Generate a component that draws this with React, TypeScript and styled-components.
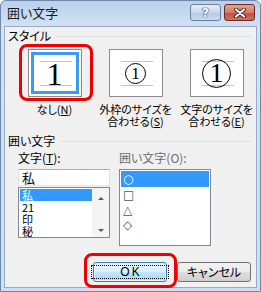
import React from "react"
import styled, { createGlobalStyle, css } from "styled-components"

const GlobalStyle = createGlobalStyle`
  html, body {
    margin: 0;
    padding: 0;
    background: #ffffff;
  }
  body {
    font-family: "Noto Sans CJK JP", "Liberation Sans", sans-serif;
    font-feature-settings: "palt";
  }
`

const Window = styled.div`
  box-sizing: border-box;
  width: 261px;
  height: 292px;
  display: flex;
  flex-direction: column;
  border: 1px solid #6f88aa;
  border-radius: 6px 6px 0 0;
  background: linear-gradient(#bad1ea, #d3e2f4 26px, #cddff3);
`
const TitleBar = styled.div`
  height: 25px;
  display: flex;
  align-items: center;
  padding: 0 5px 0 6px;
`
const Title = styled.div`
  flex: 1;
  font-size: 13px;
  line-height: 13px;
  color: #1b1b1b;
  margin-top: -2px;
`
const CaptionButton = styled.div<{ $close?: boolean }>`
  box-sizing: border-box;
  width: 31px;
  height: 17px;
  margin-left: 3px;
  margin-top: -2px;
  display: flex;
  align-items: center;
  justify-content: center;
  border-radius: 3px;
  border: 1px solid #6a80a0;
  background: linear-gradient(#e4edf8, #c6d7ec 50%, #b3c9e4 51%, #c9dbf0);
  font-family: "DejaVu Sans", sans-serif;
  font-weight: bold;
  font-size: 13px;
  color: #ffffff;
  text-shadow: 0 0 1px #2d3f5a, 0 0 1px #2d3f5a, 0 0 1px #2d3f5a;
  ${p =>
    p.$close &&
    css`
      border-color: #6b2a20;
      background: linear-gradient(#e6a294, #d57b69 50%, #c0503c 51%, #d0705b);
    `}
`
const Client = styled.div`
  flex: 1;
  margin: 0 3px 3px 3px;
  border: 1px solid #95abc7;
  background: #f0f0f0;
  display: flex;
  flex-direction: column;
  padding: 3px 4px 5px 3px;
  font-size: 12px;
  line-height: 12px;
  color: #000;
`
const SectionHeader = styled.div<{ $top?: number }>`
  display: flex;
  align-items: center;
  gap: 6px;
  height: 12px;
  margin-top: ${p => p.$top ?? 0}px;
  &::after {
    content: "";
    flex: 1;
    height: 1px;
    background: #d9dfe6;
  }
`
const Options = styled.div`
  display: grid;
  grid-template-columns: repeat(3, 81px);
  margin: 7px 0 0 6px;
`
const Option = styled.div`
  display: flex;
  flex-direction: column;
  align-items: center;
`
const Highlight = styled.div<{ $t: number; $r: number; $b: number; $l: number }>`
  position: relative;
  display: flex;
  &::after {
    content: "";
    position: absolute;
    top: ${p => p.$t}px;
    right: ${p => p.$r}px;
    bottom: ${p => p.$b}px;
    left: ${p => p.$l}px;
    border: 3px solid #f00000;
    border-radius: 8px;
    pointer-events: none;
  }
`
const OptionBox = styled.div<{ $selected?: boolean }>`
  box-sizing: border-box;
  position: relative;
  width: 54px;
  height: 48px;
  border: 1px solid #8c8c8c;
  background: #ffffff;
  display: flex;
  align-items: center;
  justify-content: center;
  ${p =>
    p.$selected &&
    css`
      box-shadow: inset 0 0 0 2px #ffffff, inset 0 0 0 5px #3c9af2;
    `}
  &::before,
  &::after {
    content: "";
    position: absolute;
    left: 11px;
    width: 32px;
    height: 1px;
    background: #c4c4c4;
  }
  &::before {
    top: 11px;
  }
  &::after {
    top: 35px;
  }
`
const Glyph = styled.span<{ $size: number }>`
  position: relative;
  z-index: 1;
  font-family: "Liberation Serif", serif;
  font-size: ${p => p.$size}px;
  line-height: 1;
  margin-top: 2px;
`
const Circle = styled.span<{ $d: number; $fs: number }>`
  position: relative;
  z-index: 1;
  box-sizing: border-box;
  width: ${p => p.$d}px;
  height: ${p => p.$d}px;
  border: 1px solid #000;
  border-radius: 50%;
  display: flex;
  align-items: center;
  justify-content: center;
  font-family: "Liberation Serif", serif;
  font-size: ${p => p.$fs}px;
  line-height: 1;
`
const OptionLabel = styled.div`
  margin-top: 6px;
  text-align: center;
  white-space: nowrap;
  font-size: 11px;
  line-height: 12px;
`
const Key = styled.span`
  text-decoration: underline;
`
const Fields = styled.div`
  display: grid;
  grid-template-columns: 92px 92px;
  gap: 9px;
  margin: 5px 0 0 10px;
`
const Field = styled.div`
  display: flex;
  flex-direction: column;
`
const FieldLabel = styled.div<{ $disabled?: boolean }>`
  height: 12px;
  margin-bottom: 5px;
  color: ${p => (p.$disabled ? "#6d6d6d" : "#000")};
`
const TextInput = styled.div`
  box-sizing: border-box;
  height: 17px;
  border: 1px solid #abadb3;
  border-color: #abadb3 #dbdfe6 #e3e9ef #e2e3ea;
  background: #fff;
  padding: 1px 0 0 3px;
  font-size: 13px;
  line-height: 14px;
`
const ListBox = styled.div<{ $h: number; $top?: number }>`
  box-sizing: border-box;
  height: ${p => p.$h}px;
  margin-top: ${p => p.$top ?? 0}px;
  border: 1px solid #828790;
  background: #fff;
  display: flex;
  padding: 1px;
  overflow: hidden;
`
const Items = styled.div`
  flex: 1;
  display: flex;
  flex-direction: column;
`
const Item = styled.div<{ $selected?: boolean; $h: number }>`
  flex: none;
  height: ${p => p.$h}px;
  display: flex;
  align-items: center;
  padding-left: 2px;
  font-size: 11px;
  line-height: 11px;
  color: ${p => (p.$selected ? "#fff" : "#000")};
  background: ${p => (p.$selected ? "#3399ff" : "transparent")};
`
const Shape = styled.span<{ $selected?: boolean }>`
  font-family: "DejaVu Sans", sans-serif;
  font-size: 12px;
  line-height: 12px;
  color: ${p => (p.$selected ? "#fff" : "#555")};
`
const ScrollBar = styled.div`
  width: 17px;
  margin: -1px -1px -1px 0;
  background: #f4f4f4;
  display: flex;
  flex-direction: column;
  justify-content: space-between;
  align-items: center;
  padding: 9px 0 5px;
`
const Arrow = styled.span<{ $down?: boolean }>`
  width: 0;
  height: 0;
  border-left: 3px solid transparent;
  border-right: 3px solid transparent;
  ${p =>
    p.$down
      ? css`
          border-top: 3px solid #5a5a5a;
        `
      : css`
          border-bottom: 3px solid #5a5a5a;
        `}
`
const ButtonRow = styled.div`
  margin-top: auto;
  display: flex;
  justify-content: flex-end;
  gap: 10px;
  padding-right: 1px;
`
const Button = styled.div<{ $default?: boolean }>`
  box-sizing: border-box;
  width: 74px;
  height: 20px;
  border: 1px solid #707070;
  border-radius: 3px;
  background: linear-gradient(#f2f2f2, #ebebeb 50%, #dddddd 51%, #cfcfcf);
  display: flex;
  align-items: center;
  justify-content: center;
  font-size: 12px;
  color: #000;
  ${p =>
    p.$default &&
    css`
      border-color: #3c7fb1;
      background: linear-gradient(#eaf6fd, #d9f0fc 50%, #bee6fd 51%, #a7d9f5);
      box-shadow: inset 0 0 0 1px #e3f4fc;
      span {
        outline: 1px dotted #000;
        outline-offset: 0;
        padding: 0 26px 0 28px;
        font-family: "Liberation Sans", sans-serif;
        letter-spacing: 2px;
      }
    `}
`

const styles = [
  { key: "N", label: ["なし"], glyph: <Glyph $size={32}>1</Glyph>, selected: true },
  { key: "S", label: ["外枠のサイズを", "合わせる"], glyph: <Circle $d={21} $fs={17}>1</Circle> },
  { key: "E", label: ["文字のサイズを", "合わせる"], glyph: <Circle $d={29} $fs={28}>1</Circle> },
]

const chars = ["私", "21", "印", "秘"]
const shapes = ["○", "□", "△", "◇"]

export default function App() {
  return (
    <>
      <GlobalStyle />
      <Window>
        <TitleBar>
          <Title>囲い文字</Title>
          <CaptionButton>?</CaptionButton>
          <CaptionButton $close>
            <svg width="14" height="10" viewBox="0 0 14 10">
              <path d="M3 1.5 L11 8.5 M11 1.5 L3 8.5" stroke="#4a1d16" strokeWidth="4" strokeLinecap="round" />
              <path d="M3 1.5 L11 8.5 M11 1.5 L3 8.5" stroke="#ffffff" strokeWidth="2.2" strokeLinecap="round" />
            </svg>
          </CaptionButton>
        </TitleBar>
        <Client>
          <SectionHeader>スタイル</SectionHeader>
          <Options>
            {styles.map(s => {
              const box = <OptionBox $selected={s.selected}>{s.glyph}</OptionBox>
              return (
                <Option key={s.key}>
                  {s.selected ? (
                    <Highlight $t={-5} $r={-11} $b={-4} $l={-9}>
                      {box}
                    </Highlight>
                  ) : (
                    box
                  )}
                  <OptionLabel>
                    {s.label.length > 1 && (
                      <>
                        {s.label[0]}
                        <br />
                      </>
                    )}
                    {s.label[s.label.length - 1]}(<Key>{s.key}</Key>)
                  </OptionLabel>
                </Option>
              )
            })}
          </Options>
          <SectionHeader $top={8}>囲い文字</SectionHeader>
          <Fields>
            <Field>
              <FieldLabel>
                文字(<Key>T</Key>):
              </FieldLabel>
              <TextInput>私</TextInput>
              <ListBox $h={51} $top={1}>
                <Items>
                  {chars.map((c, i) => (
                    <Item key={c} $h={12} $selected={i === 0}>
                      {c}
                    </Item>
                  ))}
                </Items>
                <ScrollBar>
                  <Arrow />
                  <Arrow $down />
                </ScrollBar>
              </ListBox>
            </Field>
            <Field>
              <FieldLabel $disabled>囲い文字(O):</FieldLabel>
              <ListBox $h={77}>
                <Items>
                  {shapes.map((c, i) => (
                    <Item key={c} $h={i === 0 ? 16 : 15} $selected={i === 0}>
                      <Shape $selected={i === 0}>{c}</Shape>
                    </Item>
                  ))}
                </Items>
              </ListBox>
            </Field>
          </Fields>
          <ButtonRow>
            <Highlight $t={-9} $r={-10} $b={-6} $l={-9}>
              <Button $default>
                <span>OK</span>
              </Button>
            </Highlight>
            <Button>キャンセル</Button>
          </ButtonRow>
        </Client>
      </Window>
    </>
  )
}
